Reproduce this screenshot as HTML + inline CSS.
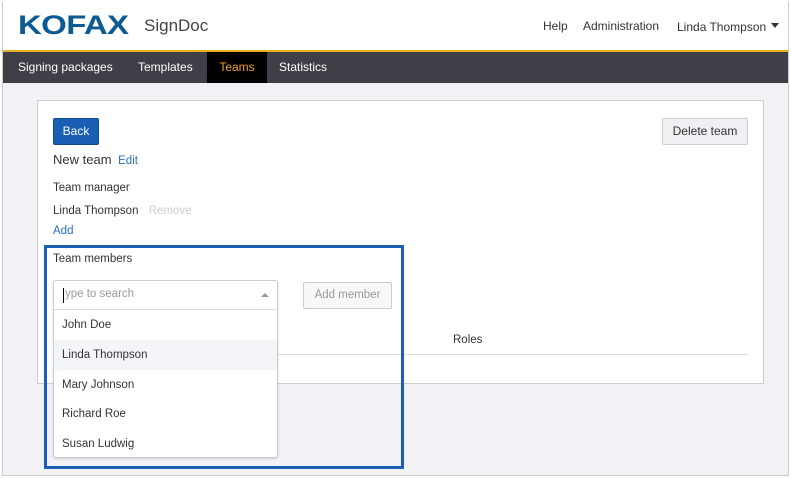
<!DOCTYPE html>
<html><head><meta charset="utf-8"><style>
*{box-sizing:border-box;margin:0;padding:0}
body{width:791px;height:478px;overflow:hidden;background:#fff;font-family:"Liberation Sans",sans-serif;font-size:12px;color:#333;position:relative}
.frame{position:absolute;left:2px;top:2px;width:787px;height:474px;border:1px solid #ccc;border-top:none;background:#f2f2f6;overflow:hidden}
.a{position:absolute;white-space:nowrap}
.hdr{position:absolute;left:0;top:0;width:785px;height:50px;background:#fff;border-bottom:2px solid #e8b020}
.nav{position:absolute;left:0;top:50px;width:785px;height:31px;background:#3f3f47;color:#fff;font-size:12px}
.nav span{position:absolute;top:0;line-height:31px}
.card{position:absolute;left:34px;top:98px;width:727px;height:284px;background:#fff;border:1px solid #ccc}
.blue{position:absolute;left:41px;top:243px;width:360px;height:224px;border:3px solid #1a5fb4}
.dd{position:absolute;left:50px;top:278px;width:225px;height:178px;border:1px solid #ccc;border-radius:3px;background:#fff;box-shadow:0 1px 2px rgba(0,0,0,.15)}
.it{position:absolute;left:0;width:223px;height:30px;line-height:30px;padding-left:8px;font-size:11.5px}
</style></head><body>
<div class="frame">
<div class="hdr">
 <div class="a" style="left:15px;top:8px;font-size:27px;font-weight:900;color:#0b5b92;letter-spacing:-0.5px;transform:scaleX(1.22);transform-origin:0 0">KOFAX</div>
 <div class="a" style="left:141px;top:14px;font-size:17px;color:#444">SignDoc</div>
 <div class="a" style="left:540px;top:17px;font-size:12px">Help</div>
 <div class="a" style="left:580px;top:17px;font-size:12px">Administration</div>
 <div class="a" style="left:674px;top:18px;font-size:12px">Linda Thompson</div>
 <div class="a" style="left:768px;top:21px;width:0;height:0;border-left:4px solid transparent;border-right:4px solid transparent;border-top:5px solid #333"></div>
</div>
<div class="nav">
 <span style="left:15px">Signing packages</span>
 <span style="left:135px">Templates</span>
 <span style="left:204px;width:60px;background:#000;color:#f0a020;text-align:center">Teams</span>
 <span style="left:276px">Statistics</span>
</div>
<div class="card">
 <div class="a" style="left:15px;top:17px;width:46px;height:27px;background:#1a5fb4;border:1px solid #114a8c;border-radius:2px;color:#fff;text-align:center;line-height:25px">Back</div>
 <div class="a" style="left:624px;top:17px;width:86px;height:27px;background:#f0f0f4;border:1px solid #ccc;border-radius:2px;text-align:center;line-height:25px">Delete team</div>
 <div class="a" style="left:15px;top:51px;font-size:13px">New team <span style="font-size:11.5px;color:#2a6ebb;margin-left:3px">Edit</span></div>
 <div class="a" style="left:15px;top:81px;font-size:11.5px">Team manager</div>
 <div class="a" style="left:15px;top:104px;font-size:11.5px">Linda Thompson <span style="color:#ccc;margin-left:7px">Remove</span></div>
 <div class="a" style="left:15px;top:124px;font-size:11.5px;color:#2a6ebb">Add</div>
 <div class="a" style="left:15px;top:152px;font-size:11.5px">Team members</div>
 <div class="a" style="left:265px;top:181px;width:89px;height:27px;border:1px solid #ccc;border-radius:2px;background:#f8f8fa;color:#999;text-align:center;line-height:25px;font-size:11.5px">Add member</div>
 <div class="a" style="left:415px;top:233px;font-size:11.5px">Roles</div>
 <div class="a" style="left:160px;top:253px;width:550px;height:1px;background:#ddd"></div>
</div>
<div class="blue"></div>
<div class="dd">
 <div class="a" style="left:9px;top:7px;width:1px;height:15px;background:#000"></div>
 <div class="a" style="left:11px;top:7px;color:#999;font-size:11.5px">ype to search</div>
 <div class="a" style="left:207px;top:12px;width:0;height:0;border-left:4px solid transparent;border-right:4px solid transparent;border-bottom:4px solid #999"></div>
 <div class="a" style="left:0;top:28px;width:223px;height:1px;background:#ddd"></div>
 <div class="it" style="top:29px">John Doe</div>
 <div class="it" style="top:59px;background:#f3f5f8">Linda Thompson</div>
 <div class="it" style="top:89px">Mary Johnson</div>
 <div class="it" style="top:118px">Richard Roe</div>
 <div class="it" style="top:148px">Susan Ludwig</div>
</div>
</div>
</body></html>
